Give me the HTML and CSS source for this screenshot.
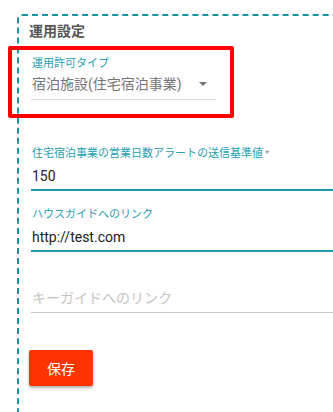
FILE: index.html
```html
<!DOCTYPE html>
<html lang="ja">
<head>
	<meta charset="UTF-8">
	<title>運用設定</title>
	<link rel="stylesheet" href="styles.css">
</head>
<body>
   <div class="panel">
   	<div class="title">運用設定</div>
   	<div class="mark">
   		<div class="field select">
   			<div class="label">運用許可タイプ</div>
   			<div class="value">宿泊施設(住宅宿泊事業)<span class="arrow"></span></div>
   		</div>
   	</div>
   	<div class="field first">
   		<div class="label">住宅宿泊事業の営業日数アラートの送信基準値<span class="req"> *</span></div>
   		<div class="value">150</div>
   	</div>
   	<div class="field">
   		<div class="label">ハウスガイドへのリンク</div>
   		<div class="value">http://test.com</div>
   	</div>
   	<div class="field empty">
   		<div class="label"></div>
   		<div class="value">キーガイドへのリンク</div>
   	</div>
   	<button class="save">保存</button>
   </div>
</body>
</html>
```

FILE: styles.css
```css
body{
	margin:0;
	padding:14px 0 0 17px;
	overflow:hidden;
	height:412px;
	box-sizing:border-box;
	font-family:Roboto,"Noto Sans CJK JP",sans-serif;
	background:#fff;
}
.panel{
	width:420px;
	height:440px;
	border:2px dashed #1693a3;
	border-radius:5px;
	padding:5px 0 0 12px;
	box-sizing:border-box;
}
.title{
	margin-left:-2px;
	font-size:14px;
	line-height:20px;
	font-weight:bold;
	color:#555;
}
.mark{
	position:relative;
	width:185px;
	padding-top:16px;
}
.mark:after{
	content:"";
	position:absolute;
	left:-23px;
	right:-18px;
	top:5px;
	bottom:-18px;
	border:4px solid #ff0000;
	border-radius:2px;
}
.field{
	padding-top:17px;
}
.mark .field{
	padding-top:0;
}
.field.first{
	padding-top:47px;
}
.label{
	font-size:11px;
	line-height:14px;
	height:14px;
	color:#26a0b2;
	padding-left:1px;
}
.req{
	color:#888;
	font-size:9px;
}
.value{
	margin-top:5px;
	padding:0 0 3px 1px;
	font-size:14px;
	line-height:20px;
	color:#212121;
	border-bottom:2px solid #1a9aab;
	white-space:nowrap;
}
.select .value{
	margin-top:3px;
	padding-bottom:5px;
	color:#757575;
	border-bottom:1px solid #dedede;
	display:flex;
	align-items:center;
}
.arrow{
	margin-left:auto;
	margin-right:9px;
	width:0;
	height:0;
	border-left:4px solid transparent;
	border-right:4px solid transparent;
	border-top:4px solid #757575;
}
.empty .value{
	color:#c4c4c4;
	border-bottom:1px solid #c8c8c8;
	padding-bottom:4px;
}
.save{
	margin:37px 0 0 -2px;
	width:64px;
	height:36px;
	border:0;
	border-radius:2px;
	background:#ff3300;
	color:#fff;
	font-family:Roboto,"Noto Sans CJK JP",sans-serif;
	font-size:14px;
	box-shadow:0 2px 3px rgba(0,0,0,0.3);
}
```
